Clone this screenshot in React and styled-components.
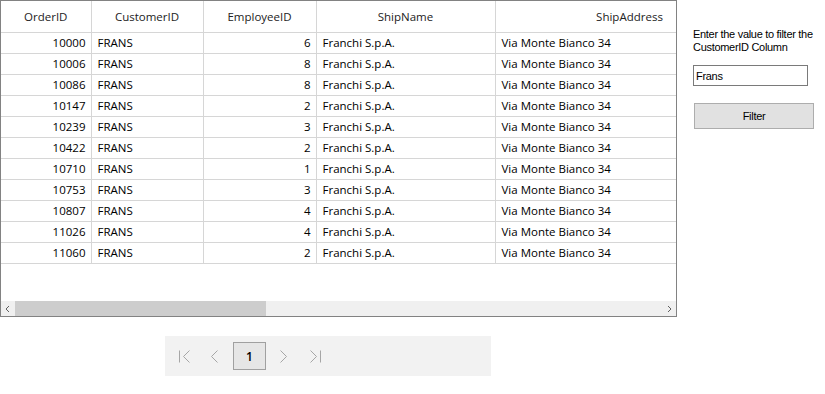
import React from 'react';
import styled, { createGlobalStyle } from 'styled-components';

const GlobalStyle = createGlobalStyle`
  html, body {
    margin: 0;
    padding: 0;
    background: #ffffff;
  }
  body {
    font-family: "Open Sans", "Noto Sans", "Liberation Sans", sans-serif;
  }
`;

const columns = [
  { key: 'OrderID', width: 90, align: 'right' },
  { key: 'CustomerID', width: 112, align: 'left' },
  { key: 'EmployeeID', width: 113, align: 'right' },
  { key: 'ShipName', width: 179, align: 'left' },
  { key: 'ShipAddress', width: 269, align: 'left' },
];

const orders = [
  [10000, 6], [10006, 8], [10086, 8], [10147, 2], [10239, 3], [10422, 2],
  [10710, 1], [10753, 3], [10807, 4], [11026, 4], [11060, 2],
].map(([id, emp]) => ({
  OrderID: id,
  CustomerID: 'FRANS',
  EmployeeID: emp,
  ShipName: 'Franchi S.p.A.',
  ShipAddress: 'Via Monte Bianco 34',
}));

const Page = styled.div`
  display: flex;
  align-items: flex-start;
  gap: 16px;
`;

const LeftColumn = styled.div`
  display: flex;
  flex-direction: column;
`;

const GridBox = styled.div`
  width: 677px;
  height: 317px;
  box-sizing: border-box;
  border: 1px solid #828282;
  display: flex;
  flex-direction: column;
  overflow: hidden;
`;

const Viewport = styled.div`
  flex: 1;
  overflow: hidden;
`;

const Table = styled.table`
  border-collapse: collapse;
  table-layout: fixed;
  width: 763px;
  font-size: 11.5px;
  color: #000;
`;

const HeadCell = styled.th`
  height: 31px;
  padding: 0 6px;
  font-weight: 400;
  color: #222;
  text-align: center;
  border-right: 1px solid #d6d6d6;
  border-bottom: 1px solid #d6d6d6;
  white-space: nowrap;
  overflow: hidden;
`;

const Cell = styled.td`
  height: 20px;
  padding: 0 5px 0 6px;
  text-align: ${(p) => p.$align};
  border-right: 1px solid #d6d6d6;
  border-bottom: 1px solid #d6d6d6;
  white-space: nowrap;
  overflow: hidden;
  line-height: 20px;
`;

const ScrollBar = styled.div`
  height: 15px;
  background: #f0f0f0;
  display: flex;
  align-items: stretch;
`;

const ScrollArrow = styled.div`
  width: 14px;
  display: flex;
  align-items: center;
  justify-content: center;
`;

const ScrollTrack = styled.div`
  flex: 1;
  display: flex;
  align-items: stretch;
`;

const ScrollThumb = styled.div`
  width: 251px;
  background: #cdcdcd;
`;

const Pager = styled.div`
  margin: 19px 0 0 165px;
  width: 326px;
  height: 40px;
  background: #f2f2f2;
  display: flex;
  align-items: center;
  padding-left: 14px;
  box-sizing: border-box;
`;

const PagerIcon = styled.svg`
  flex: none;
  margin-left: ${(p) => p.$gap}px;
`;

const PageButton = styled.div`
  margin-left: 15px;
  width: 33px;
  height: 28px;
  box-sizing: border-box;
  border: 1px solid #a0a0a0;
  background: #e6e6e6;
  display: flex;
  align-items: center;
  justify-content: center;
  font-size: 12px;
  font-weight: 600;
  color: #000;
`;

const FilterPanel = styled.div`
  padding-top: 28px;
  display: flex;
  flex-direction: column;
  font-family: "Liberation Sans", Arial, sans-serif;
  font-size: 11px;
  letter-spacing: -0.3px;
  color: #000;
`;

const FilterLabel = styled.div`
  width: 128px;
  line-height: 13px;
`;

const FilterInput = styled.input`
  margin-top: 11px;
  width: 115px;
  height: 21px;
  box-sizing: border-box;
  border: 1px solid #7a7a7a;
  padding: 0 2px;
  font: inherit;
  letter-spacing: inherit;
  outline: none;
`;

const FilterButton = styled.button`
  margin: 17px 0 0 1px;
  width: 120px;
  height: 26px;
  box-sizing: border-box;
  border: 1px solid #adadad;
  background: #e1e1e1;
  font: inherit;
  letter-spacing: inherit;
  color: #000;
  padding: 0;
`;

const iconStroke = { fill: 'none', stroke: '#a6a6a6', strokeWidth: 1 };

const FirstIcon = () => (
  <PagerIcon $gap={0} width="11" height="13" viewBox="0 0 11 13" {...iconStroke}>
    <line x1="0.5" y1="0.5" x2="0.5" y2="12.5" />
    <polyline points="10.5,0.5 4.5,6.5 10.5,12.5" />
  </PagerIcon>
);

const PrevIcon = () => (
  <PagerIcon $gap={21} width="7" height="13" viewBox="0 0 7 13" {...iconStroke}>
    <polyline points="6.5,0.5 0.5,6.5 6.5,12.5" />
  </PagerIcon>
);

const NextIcon = () => (
  <PagerIcon $gap={14} width="7" height="13" viewBox="0 0 7 13" {...iconStroke}>
    <polyline points="0.5,0.5 6.5,6.5 0.5,12.5" />
  </PagerIcon>
);

const LastIcon = () => (
  <PagerIcon $gap={23} width="11" height="13" viewBox="0 0 11 13" {...iconStroke}>
    <polyline points="0.5,0.5 6.5,6.5 0.5,12.5" />
    <line x1="10.5" y1="0.5" x2="10.5" y2="12.5" />
  </PagerIcon>
);

const SmallArrow = ({ dir }) => (
  <svg width="8" height="8" viewBox="0 0 8 8" fill="none" stroke="#606060" strokeWidth="1">
    {dir === 'left' ? <polyline points="5,1 2,4 5,7" /> : <polyline points="3,1 6,4 3,7" />}
  </svg>
);

export default function App() {
  return (
    <>
      <GlobalStyle />
      <Page>
        <LeftColumn>
          <GridBox>
            <Viewport>
              <Table>
                <colgroup>
                  {columns.map((c) => (
                    <col key={c.key} style={{ width: c.width }} />
                  ))}
                </colgroup>
                <thead>
                  <tr>
                    {columns.map((c) => (
                      <HeadCell key={c.key}>{c.key}</HeadCell>
                    ))}
                  </tr>
                </thead>
                <tbody>
                  {orders.map((o) => (
                    <tr key={o.OrderID}>
                      {columns.map((c) => (
                        <Cell key={c.key} $align={c.align}>{o[c.key]}</Cell>
                      ))}
                    </tr>
                  ))}
                </tbody>
              </Table>
            </Viewport>
            <ScrollBar>
              <ScrollArrow><SmallArrow dir="left" /></ScrollArrow>
              <ScrollTrack><ScrollThumb /></ScrollTrack>
              <ScrollArrow><SmallArrow dir="right" /></ScrollArrow>
            </ScrollBar>
          </GridBox>
          <Pager>
            <FirstIcon />
            <PrevIcon />
            <PageButton>1</PageButton>
            <NextIcon />
            <LastIcon />
          </Pager>
        </LeftColumn>
        <FilterPanel>
          <FilterLabel>Enter the value to filter the CustomerID Column</FilterLabel>
          <FilterInput defaultValue="Frans" />
          <FilterButton>Filter</FilterButton>
        </FilterPanel>
      </Page>
    </>
  );
}
